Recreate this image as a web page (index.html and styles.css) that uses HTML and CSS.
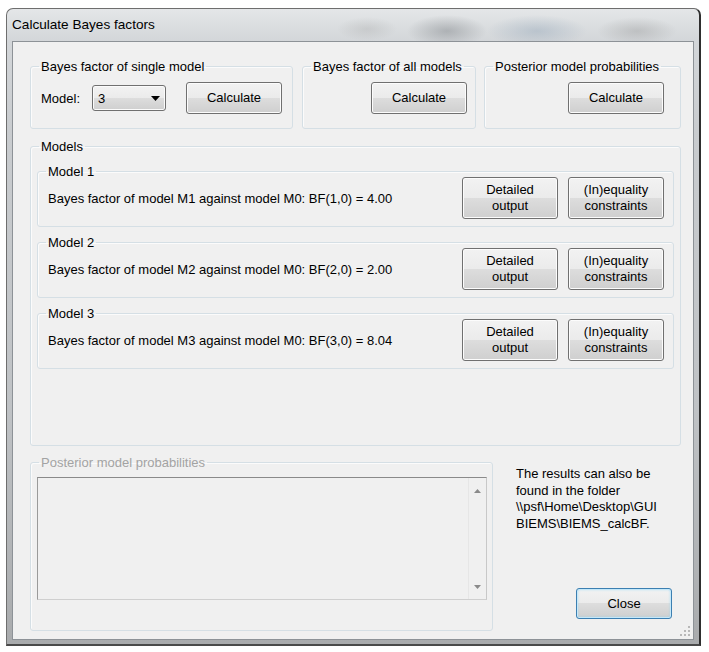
FILE: index.html
```html
<!DOCTYPE html>
<html>
<head>
<meta charset="utf-8">
<title>Calculate Bayes factors</title>
<link rel="stylesheet" href="styles.css">
</head>
<body>
<div class="window">
  <div class="titlebar"><span class="title">Calculate Bayes factors</span></div>
  <div class="client">
    <div class="top-row">
      <fieldset class="grp g-single">
        <legend>Bayes factor of single model</legend>
        <div class="grp-row">
          <span class="lbl">Model:</span>
          <div class="combo"><span>3</span><svg class="combo-arrow" width="9" height="5" viewBox="0 0 9 5"><path d="M0 0H9L4.5 5Z" fill="#000"/></svg></div>
          <button class="btn btn-calc">Calculate</button>
        </div>
      </fieldset>
      <fieldset class="grp g-all">
        <legend>Bayes factor of all models</legend>
        <div class="grp-row end">
          <button class="btn btn-calc">Calculate</button>
        </div>
      </fieldset>
      <fieldset class="grp g-post">
        <legend>Posterior model probabilities</legend>
        <div class="grp-row end">
          <button class="btn btn-calc">Calculate</button>
        </div>
      </fieldset>
    </div>

    <fieldset class="grp models">
      <legend>Models</legend>
      <fieldset class="grp sub">
        <legend>Model 1</legend>
        <div class="sub-row">
          <span class="bf">Bayes factor of model M1 against model M0: BF(1,0) = 4.00</span>
          <button class="btn btn-two">Detailed<br>output</button>
          <button class="btn btn-two">(In)equality<br>constraints</button>
        </div>
      </fieldset>
      <fieldset class="grp sub">
        <legend>Model 2</legend>
        <div class="sub-row">
          <span class="bf">Bayes factor of model M2 against model M0: BF(2,0) = 2.00</span>
          <button class="btn btn-two">Detailed<br>output</button>
          <button class="btn btn-two">(In)equality<br>constraints</button>
        </div>
      </fieldset>
      <fieldset class="grp sub">
        <legend>Model 3</legend>
        <div class="sub-row">
          <span class="bf">Bayes factor of model M3 against model M0: BF(3,0) = 8.04</span>
          <button class="btn btn-two">Detailed<br>output</button>
          <button class="btn btn-two">(In)equality<br>constraints</button>
        </div>
      </fieldset>
    </fieldset>

    <div class="bottom-row">
      <fieldset class="grp posterior">
        <legend class="disabled">Posterior model probabilities</legend>
        <div class="textbox">
          <div class="text-area"></div>
          <div class="vscroll">
            <svg width="7" height="4" viewBox="0 0 7 4"><path d="M0 4L3.5 0L7 4Z" fill="#8a8a8a"/></svg>
            <svg width="7" height="4" viewBox="0 0 7 4"><path d="M0 0H7L3.5 4Z" fill="#8a8a8a"/></svg>
          </div>
        </div>
      </fieldset>
      <div class="side">
        <p class="note">The results can also be<br>found in the folder<br>\\psf\Home\Desktop\GUI<br>BIEMS\BIEMS_calcBF.</p>
        <button class="btn btn-close">Close</button>
      </div>
    </div>

    <svg class="grip" width="11" height="11" viewBox="0 0 11 11">
      <g fill="#b8b8b8">
        <rect x="8" y="0" width="2" height="2"/>
        <rect x="4" y="4" width="2" height="2"/><rect x="8" y="4" width="2" height="2"/>
        <rect x="0" y="8" width="2" height="2"/><rect x="4" y="8" width="2" height="2"/><rect x="8" y="8" width="2" height="2"/>
      </g>
    </svg>
  </div>
</div>
</body>
</html>
```
FILE: styles.css
```css
html, body {
  margin: 0;
  padding: 0;
  background: #ffffff;
}
body {
  font-family: "Liberation Sans", Arial, sans-serif;
  font-size: 13px;
  color: #000;
  width: 709px;
  height: 652px;
  overflow: hidden;
}

.window {
  margin: 8px 0 0 6px;
  width: 695px;
  height: 638px;
  box-sizing: border-box;
  border: 1px solid #6e6e6e;
  border-right: 2px solid #2e2e2e;
  border-bottom: 2px solid #4a4a4a;
  border-radius: 7px 7px 0 0;
  background:
    radial-gradient(ellipse 40px 16px at 440px 22px, rgba(110,115,120,0.4), transparent),
    radial-gradient(ellipse 50px 16px at 530px 22px, rgba(140,160,180,0.4), transparent),
    radial-gradient(ellipse 40px 14px at 630px 22px, rgba(130,130,130,0.3), transparent),
    radial-gradient(ellipse 30px 12px at 360px 20px, rgba(150,150,150,0.25), transparent),
    linear-gradient(to bottom, #e4e6e8 0px, #d3d6d9 32px, #c9cccf 120px, #bfc2c5 400px, #a9abad 100%);
  display: flex;
  flex-direction: column;
}

.titlebar {
  height: 32px;
  flex: none;
  display: flex;
  align-items: center;
  padding-left: 5px;
  padding-bottom: 1px;
  box-sizing: border-box;
}
.title {
  font-size: 13.6px;
  color: #000;
}

.client {
  flex: 1;
  margin: 0 5px 4px 5px;
  border: 1px solid #8d9297;
  background: #f0f0f0;
  padding: 16px 0 0 17px;
  position: relative;
  box-sizing: border-box;
}

/* group boxes */
.grp {
  margin: 0;
  padding: 0;
  border: 1px solid #d5dfe5;
  border-radius: 3px;
  box-shadow: inset 1px 1px 0 #fbfbfb;
  min-width: 0;
  box-sizing: border-box;
}
.grp > legend {
  padding: 0 2px;
  margin-left: 8px;
  line-height: 17px;
  color: #000;
}
.grp > legend.disabled {
  color: #a3a3a3;
}

.top-row {
  display: flex;
  gap: 0;
}
.g-single { width: 263px; height: 71px; }
.g-all { width: 174px; height: 71px; margin-left: 9px; }
.g-post { width: 197px; height: 71px; margin-left: 8px; }

.grp-row {
  display: flex;
  align-items: center;
  padding: 7px 10px 0 10px;
}
.grp-row.end { justify-content: flex-end; }
.g-all .grp-row { padding-right: 8px; }
.g-post .grp-row { padding-right: 16px; }

.lbl { margin-right: 12px; }

.combo {
  width: 74px;
  height: 26px;
  box-sizing: border-box;
  border: 1px solid #707070;
  border-radius: 3px;
  background: linear-gradient(to bottom, #f2f2f2 0%, #ebebeb 50%, #dddddd 50%, #cfcfcf 100%);
  box-shadow: inset 0 0 0 1px #fbfbfb;
  display: flex;
  align-items: center;
  justify-content: space-between;
  padding: 0 5px 0 5px;
}
.combo-arrow { display: block; margin-top: 1px; }

.btn {
  width: 96px;
  box-sizing: border-box;
  border: 1px solid #707070;
  border-radius: 3px;
  background: linear-gradient(to bottom, #f2f2f2 0%, #ebebeb 49%, #dddddd 50%, #cfcfcf 100%);
  box-shadow: inset 0 0 0 1px #fcfcfc;
  font-family: inherit;
  font-size: 13px;
  color: #000;
  padding: 0;
  margin: 0;
  line-height: 16px;
  text-align: center;
}
.btn-calc {
  height: 32px;
  margin-left: auto;
}
.btn-two {
  height: 42px;
  margin-left: 10px;
}

/* models */
.models {
  width: 651px;
  height: 308px;
  margin-top: 9px;
  padding: 8px 6px 0 6px;
}
.models > legend { margin-left: 2px; }
.sub {
  width: 100%;
  height: 64px;
  margin-bottom: 7px;
}
.sub:last-child { margin-bottom: 0; }
.sub-row {
  display: flex;
  align-items: center;
  margin-top: -3px;
  padding: 0 9px 0 10px;
}
.bf { margin-right: auto; }

/* bottom */
.bottom-row {
  display: flex;
  margin-top: 8px;
  width: 663px;
}
.posterior {
  width: 463px;
  height: 177px;
  padding: 6px 5px 0 6px;
}
.posterior > legend { margin-left: 2px; }
.textbox {
  height: 123px;
  box-sizing: border-box;
  border: 1px solid #9a9a9a;
  border-top-color: #8a8a8a;
  border-right-color: #c8c8c8;
  border-bottom-color: #cfcfcf;
  background: #f0f0f0;
  display: flex;
}
.text-area { flex: 1; }
.vscroll {
  width: 17px;
  border-left: 1px solid #e6e6e6;
  display: flex;
  flex-direction: column;
  align-items: center;
  justify-content: space-between;
  padding: 11px 0 10px 0;
}
.vscroll svg { display: block; }

.side {
  flex: 1;
  display: flex;
  flex-direction: column;
  margin-left: 23px;
}
.note {
  margin: 12px 0 0 0;
  line-height: 16.5px;
  font-size: 13px;
  color: #000;
}
.btn-close {
  height: 31px;
  border-color: #3c7fb1;
  box-shadow: inset 0 0 0 1px #c4e8fa, inset 0 0 3px #7dcff5;
  margin-top: auto;
  margin-bottom: 12px;
  align-self: flex-end;
  margin-right: 21px;
}

.grip {
  position: absolute;
  right: 2px;
  bottom: 2px;
}
```
